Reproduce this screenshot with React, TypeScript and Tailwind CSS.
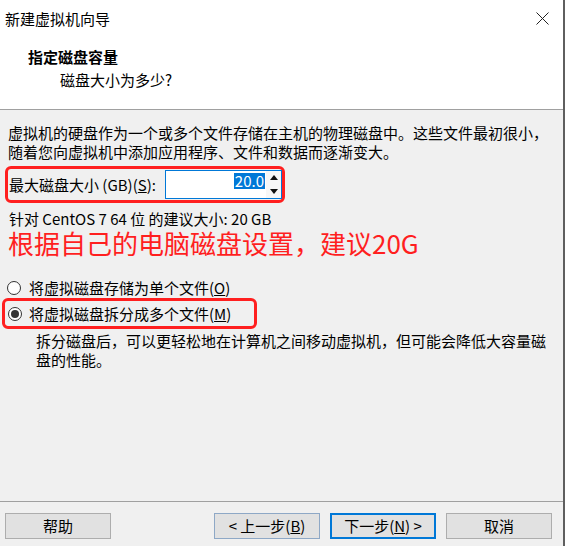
const font = { fontFamily: '"Noto Sans CJK SC", "Noto Sans", sans-serif' };

function Radio({ checked }: { checked?: boolean }) {
	return (
		<span className="w-[14px] h-[14px] rounded-full border border-[#333] bg-white flex items-center justify-center shrink-0">
			{checked && <span className="w-[8px] h-[8px] rounded-full bg-[#333]" />}
		</span>
	);
}

function Button({ children, variant }: { children: React.ReactNode; variant?: "default" | "hover" | "focus" }) {
	const border =
		variant === "focus"
			? "border-2 border-[#0078d7]"
			: variant === "hover"
				? "border border-[#8ea8c6]"
				: "border border-[#adadad]";
	return (
		<div className={`w-[106px] h-[26px] bg-[#e1e1e1] ${border} flex items-center justify-center text-[15px] leading-[18px] text-black`}>
			{children}
		</div>
	);
}

export default function App() {
	return (
		<div className="w-[565px] h-[546px] flex flex-col bg-[#f0f0f0] border-r-2 border-[#5f5f5f] overflow-hidden text-black" style={font}>
			{/* header */}
			<div className="h-[110px] bg-white border-b border-[#a0a0a0] flex flex-col shrink-0">
				<div className="flex justify-between items-center pl-[5px] pr-[14px] pt-[9px] h-[29px]">
					<span className="text-[15px] leading-[20px]">新建虚拟机向导</span>
					<svg width="13" height="13" viewBox="0 0 13 13" className="mb-[1px]">
						<path d="M0.5 0.5 L12.5 12.5 M12.5 0.5 L0.5 12.5" stroke="#222" strokeWidth="1" />
					</svg>
				</div>
				<div className="pl-[28px] mt-[18px] text-[15px] leading-[20px] font-bold">指定磁盘容量</div>
				<div className="pl-[60px] mt-[3px] text-[15px] leading-[20px]">磁盘大小为多少?</div>
			</div>

			{/* body */}
			<div className="flex-1 flex flex-col text-[15px] leading-[19px]">
				<p className="pl-[8px] pt-[13px]">
					虚拟机的硬盘作为一个或多个文件存储在主机的物理磁盘中。这些文件最初很小，
					<br />
					随着您向虚拟机中添加应用程序、文件和数据而逐渐变大。
				</p>

				<div className="ml-[5px] mt-[5px] w-[280px] h-[37px] border-[3px] border-[#ff1f1f] rounded-[6px] flex items-center justify-between pl-[1px]">
					<span>
						最大磁盘大小 (GB)(<span className="underline">S</span>):
					</span>
					<div className="w-[117px] h-[29px] border border-[#0078d7] bg-white flex">
						<div className="flex-1 flex justify-end items-start pt-[2px] pr-[1px]">
							<span className="bg-[#0078d7] text-white px-[1px] leading-[16px]">20.0</span>
						</div>
						<div className="w-[15px] flex flex-col bg-[#f7f7f7]">
							<div className="flex-1 flex items-center justify-center">
								<svg width="8" height="5" viewBox="0 0 8 5">
									<path d="M0 5 L4 0 L8 5 Z" fill="#111" />
								</svg>
							</div>
							<div className="flex-1 flex items-center justify-center">
								<svg width="8" height="5" viewBox="0 0 8 5">
									<path d="M0 0 L8 0 L4 5 Z" fill="#111" />
								</svg>
							</div>
						</div>
					</div>
				</div>

				<div className="pl-[9px] mt-[6px]">针对 CentOS 7 64 位 的建议大小: 20 GB</div>
				<div className="pl-[8px] text-[26px] leading-[30px] text-[#ff1f1f]">根据自己的电脑磁盘设置，建议20G</div>

				<label className="pl-[7px] mt-[20px] flex items-center gap-[8px]">
					<Radio />
					<span>
						将虚拟磁盘存储为单个文件(<span className="underline">O</span>)
					</span>
				</label>

				<div className="ml-[2px] mt-[1px] w-[255px] h-[31px] border-[3px] border-[#ff1f1f] rounded-[6px] flex items-center pl-[3px] gap-[7px]">
					<Radio checked />
					<span>
						将虚拟磁盘拆分成多个文件(<span className="underline">M</span>)
					</span>
				</div>

				<p className="pl-[36px] mt-[2px]">
					拆分磁盘后，可以更轻松地在计算机之间移动虚拟机，但可能会降低大容量磁
					<br />
					盘的性能。
				</p>
			</div>

			{/* footer */}
			<div className="border-t border-[#a0a0a0] h-[45px] shrink-0 flex items-start pt-[11px] pl-[5px] pr-[11px]">
				<Button>帮助</Button>
				<div className="flex-1" />
				<div className="flex gap-[10px]">
					<Button variant="hover">
						&lt; 上一步(<span className="underline">B</span>)
					</Button>
					<Button variant="focus">
						下一步(<span className="underline">N</span>) &gt;
					</Button>
					<Button>取消</Button>
				</div>
			</div>
		</div>
	);
}
